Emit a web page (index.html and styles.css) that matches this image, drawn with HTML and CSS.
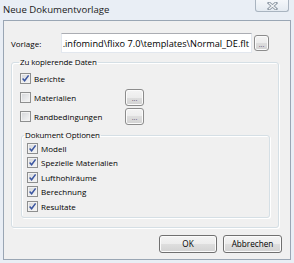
FILE: index.html
```html
<!DOCTYPE html>
<html lang="de">
<head>
    <meta charset="UTF-8">
    <meta name="viewport" content="width=device-width, initial-scale=1.0">
    <title>Neue Dokumentvorlage</title>
    <link rel="stylesheet" href="styles.css">
</head>
<body>
    <div class="window">
        <div class="titlebar">
            <span class="title">Neue Dokumentvorlage</span>
            <button class="close">
                <svg width="11" height="8" viewBox="0 0 11 8">
                    <path d="M2 1 L9 7 M9 1 L2 7" stroke="#8f9aa6" stroke-width="3" stroke-linecap="square"/>
                    <path d="M2 1 L9 7 M9 1 L2 7" stroke="#f3f5f7" stroke-width="1.2"/>
                </svg>
            </button>
        </div>
        <div class="client">
            <div class="path-row">
                <span class="path-label">Vorlage:</span>
                <div class="path-input"><span>.infomind\flixo 7.0\templates\Normal_DE.flt</span></div>
                <button class="btn btn-dots">...</button>
            </div>

            <fieldset class="group group-main">
                <legend>Zu kopierende Daten</legend>
                <div class="check-row">
                    <span class="cb"><svg width="9" height="9" viewBox="0 0 9 9"><path d="M1.6 4.6 L3.6 6.8 L7.6 1.4" fill="none" stroke="#3a55a0" stroke-width="1.5"/></svg></span>
                    <span>Berichte</span>
                </div>
                <div class="check-row">
                    <span class="cb"></span>
                    <span class="check-text">Materialien</span>
                    <button class="btn btn-dots btn-side">...</button>
                </div>
                <div class="check-row">
                    <span class="cb"></span>
                    <span class="check-text">Randbedingungen</span>
                    <button class="btn btn-dots btn-side">...</button>
                </div>

                <fieldset class="group group-options">
                    <legend>Dokument Optionen</legend>
                    <div class="check-row small">
                        <span class="cb"><svg width="9" height="9" viewBox="0 0 9 9"><path d="M1.6 4.6 L3.6 6.8 L7.6 1.4" fill="none" stroke="#3a55a0" stroke-width="1.5"/></svg></span>
                        <span>Modell</span>
                    </div>
                    <div class="check-row small">
                        <span class="cb"><svg width="9" height="9" viewBox="0 0 9 9"><path d="M1.6 4.6 L3.6 6.8 L7.6 1.4" fill="none" stroke="#3a55a0" stroke-width="1.5"/></svg></span>
                        <span>Spezielle Materialien</span>
                    </div>
                    <div class="check-row small">
                        <span class="cb"><svg width="9" height="9" viewBox="0 0 9 9"><path d="M1.6 4.6 L3.6 6.8 L7.6 1.4" fill="none" stroke="#3a55a0" stroke-width="1.5"/></svg></span>
                        <span>Lufthohlräume</span>
                    </div>
                    <div class="check-row small">
                        <span class="cb"><svg width="9" height="9" viewBox="0 0 9 9"><path d="M1.6 4.6 L3.6 6.8 L7.6 1.4" fill="none" stroke="#3a55a0" stroke-width="1.5"/></svg></span>
                        <span>Berechnung</span>
                    </div>
                    <div class="check-row small">
                        <span class="cb"><svg width="9" height="9" viewBox="0 0 9 9"><path d="M1.6 4.6 L3.6 6.8 L7.6 1.4" fill="none" stroke="#3a55a0" stroke-width="1.5"/></svg></span>
                        <span>Resultate</span>
                    </div>
                </fieldset>
            </fieldset>

            <div class="footer">
                <button class="btn btn-action">OK</button>
                <button class="btn btn-action">Abbrechen</button>
            </div>
        </div>
    </div>
</body>
</html>
```

FILE: styles.css
```css
body {
    margin: 0;
    font-family: "Open Sans", "Noto Sans", sans-serif;
    font-size: 8px;
    color: #000;
    background-color: #e9eef5;
}
.window {
    width: 294px;
    height: 263px;
    background-color: #e9eef5;
}
.titlebar {
    height: 20px;
    display: flex;
    align-items: flex-start;
}
.title {
    font-size: 9.6px;
    line-height: 20px;
    padding-left: 3px;
    color: #1a1a1a;
}
.close {
    margin-left: auto;
    margin-right: 5px;
    width: 34px;
    height: 12px;
    padding: 0;
    border: 1px solid #a9b4c0;
    border-top: none;
    border-radius: 0 0 3px 3px;
    background: linear-gradient(#f4f7fa, #e4eaf1);
    display: flex;
    align-items: center;
    justify-content: center;
}
.client {
    box-sizing: border-box;
    margin-left: 3px;
    width: 288px;
    height: 240px;
    border: 1px solid #9aa6b4;
    background-color: #f0f0f0;
    padding: 12px 8px 0 7px;
}
.path-row {
    display: flex;
    align-items: center;
    height: 20px;
}
.path-label {
    width: 50px;
}
.path-input {
    box-sizing: border-box;
    width: 191px;
    height: 20px;
    border: 1px solid #e2e7ee;
    border-top-color: #abadb3;
    background: #fff;
    display: flex;
    justify-content: flex-end;
    align-items: center;
    overflow: hidden;
    white-space: nowrap;
    padding-right: 2px;
    font-size: 9.2px;
}
.btn {
    box-sizing: border-box;
    padding: 0;
    font-family: inherit;
    font-size: 8.2px;
    color: #000;
    border: 1px solid #7a7a7a;
    border-radius: 3px;
    background: linear-gradient(#f4f4f4 0%, #ececec 50%, #dedede 50%, #d2d2d2 100%);
    box-shadow: inset 0 0 0 1px #fbfbfb;
}
.btn-dots {
    width: 15px;
    height: 16px;
    margin-left: 2px;
    line-height: 18px;
    font-size: 7px;
    color: #5a5070;
    border-color: #8c8c8c;
}
.btn-side {
    width: 19px;
    height: 17px;
    margin-left: 0;
}
.group {
    margin: 0;
    border: 1px solid #d5dfe5;
    border-radius: 3px;
    box-shadow: inset 1px 1px 0 #fff, 1px 1px 0 #fff;
}
.group legend {
    line-height: 12px;
    padding: 0 1px;
    margin-left: -1px;
    letter-spacing: -0.1px;
}
.group-main {
    margin: 3px 3px 0 0;
    padding: 1px 8px 9px 8px;
}
.group-options {
    margin: 3px 0 0 1px;
    padding: 0 0 3px 5px;
}
.group-options legend {
    margin-left: -3px;
}
.check-row {
    display: flex;
    align-items: center;
    height: 19px;
}
.check-row.small {
    height: 14.5px;
}
.cb {
    box-sizing: border-box;
    width: 11px;
    height: 11px;
    margin-right: 3px;
    border: 1px solid #8e8f8f;
    background: linear-gradient(135deg, #d3d5d8, #f7f7f7);
    box-shadow: inset 0 0 0 1px #f2f2f2;
    display: flex;
    align-items: center;
    justify-content: center;
}
.check-text {
    width: 91px;
}
.footer {
    display: flex;
    justify-content: flex-end;
    gap: 6px;
    margin-top: 7px;
}
.btn-action {
    width: 58px;
    height: 18px;
    border-color: #707070;
}
.btn-action + .btn-action {
    width: 59px;
}
```
